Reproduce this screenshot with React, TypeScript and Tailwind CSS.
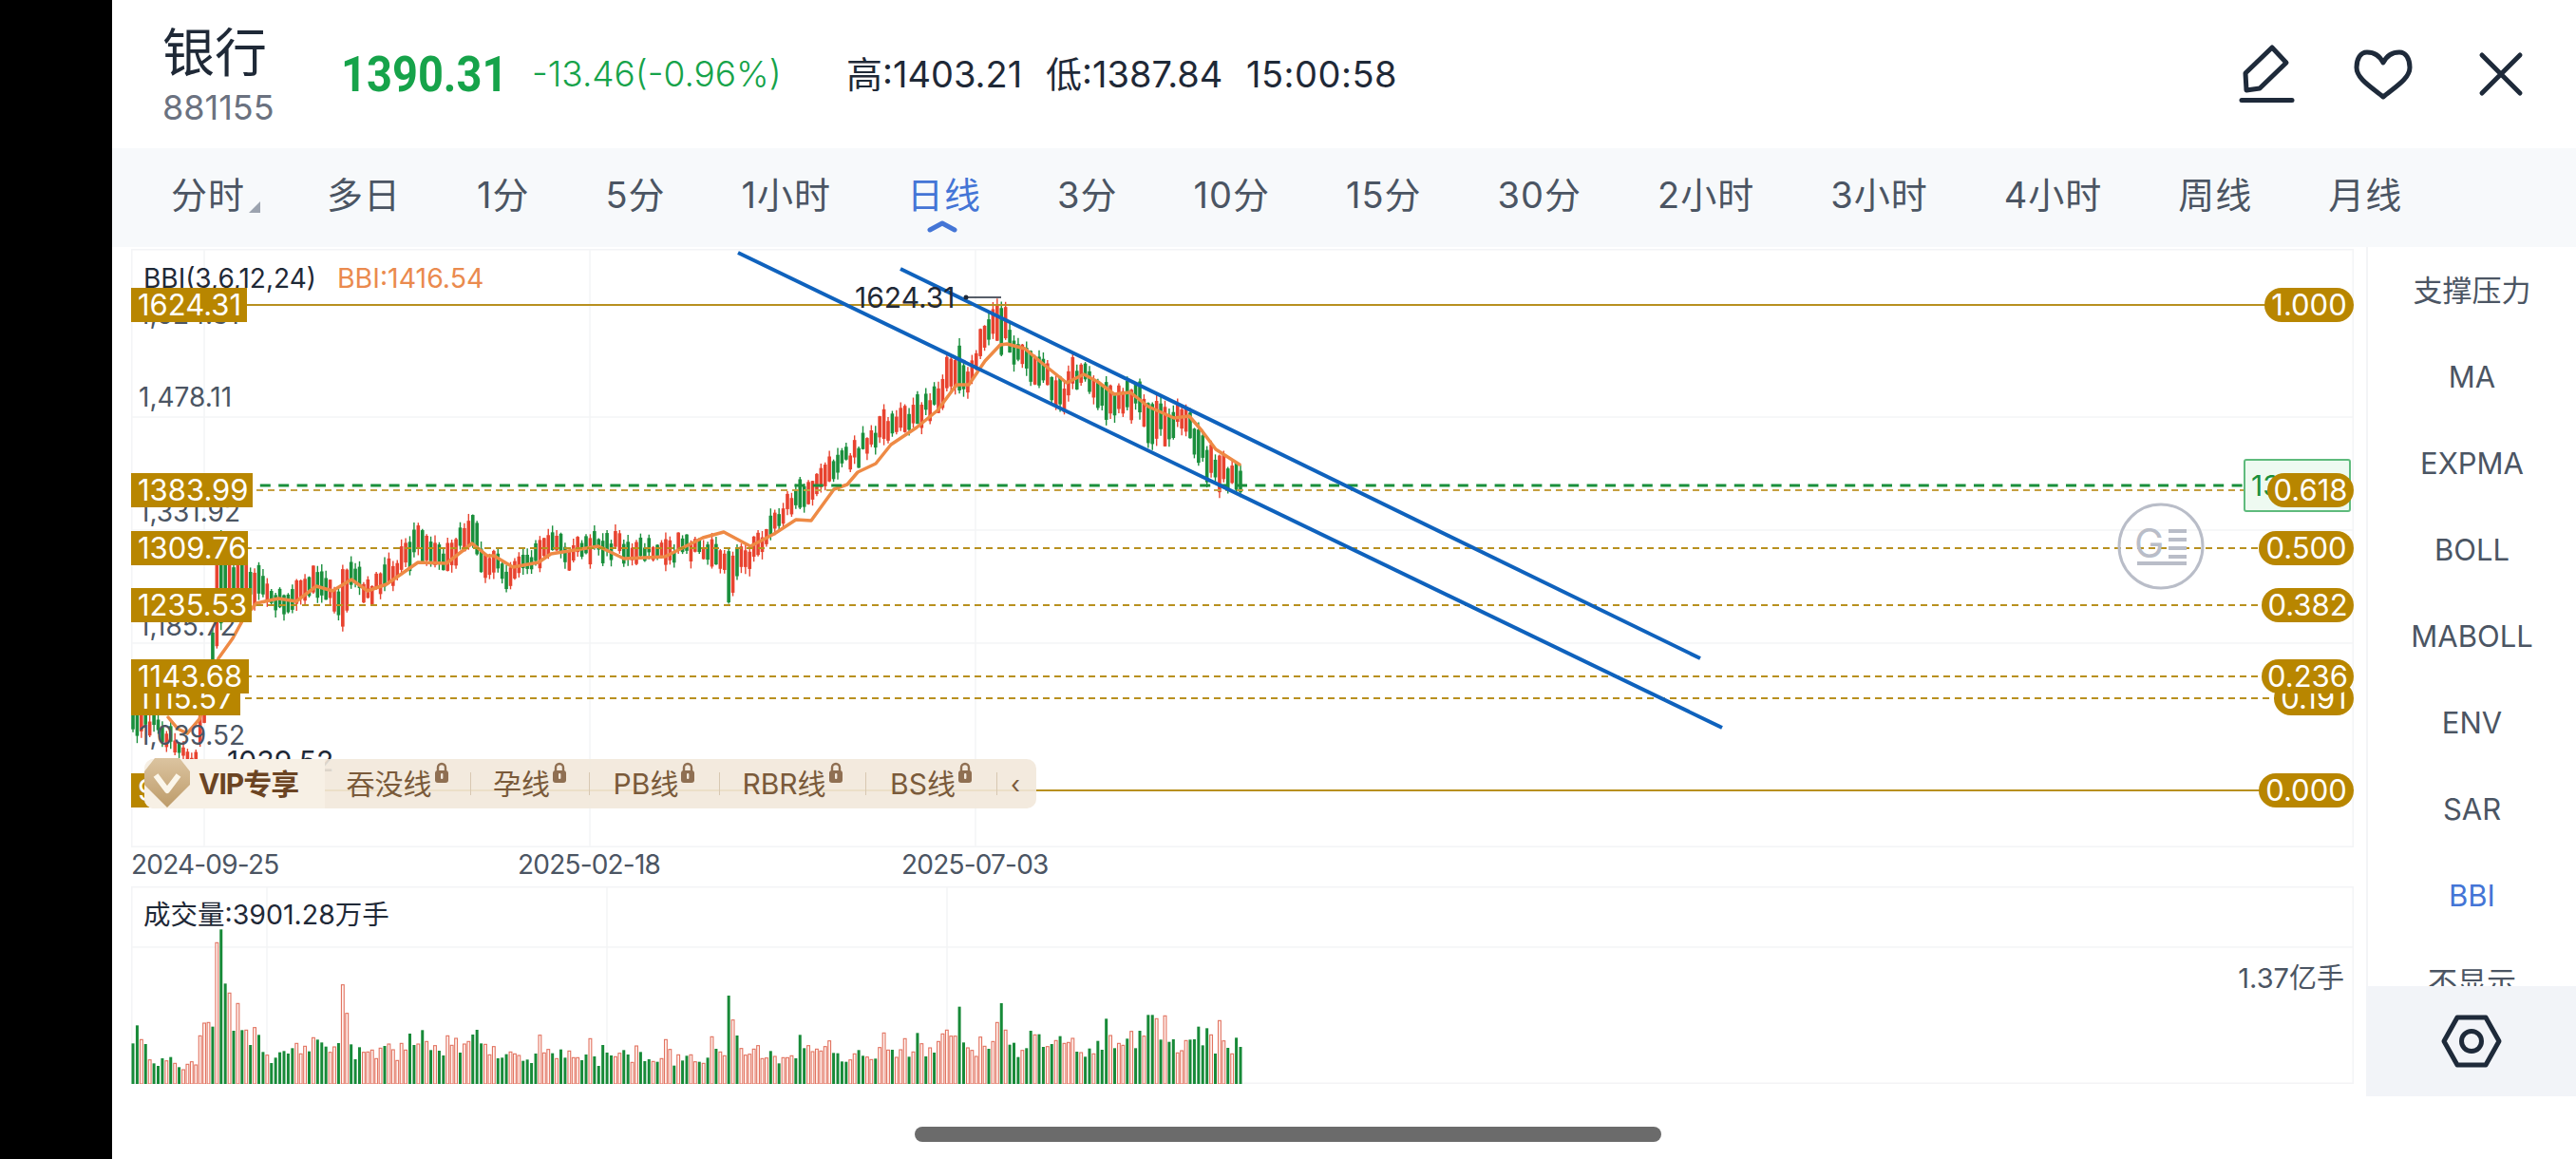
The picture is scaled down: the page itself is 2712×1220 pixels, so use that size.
const TABS = ["多日", "1分", "5分", "1小时", "日线", "3分", "10分", "15分", "30分", "2小时", "3小时", "4小时", "周线", "月线"];
const SIDE_ITEMS = ["支撑压力", "MA", "EXPMA", "BOLL", "MABOLL", "ENV", "SAR", "BBI", "不显示"];

const FONT = "font-['Inter','Noto_Sans_CJK_SC',sans-serif]";

// volume bars read off the picture: colour + top of bar in crop coordinates
const VOL_A = "g505 g448 r493 g507 r557 g568 g576 g552 r560 g548 r568 g580 r588 r571 r563 r573 r481 r441 r439 g452 r187 g145 g316 r346 g465 r379 g463 r463 g510 r455 g478 g532 r542 g567 g550 g533 g529 g537 g520 r505 r538 r514 g530 r487 g493 g502 g515 r533 r516 g504 r320 r410 g508 g555 g517 r533 r532 r526 r553 r520 g513 r507 r525 r559 r505 r526 g474 g510 r507 g463 r499 g526 r512 g528 g543 r481 r511 r489 g534 r507 r499 g477 g462 g505 r508 r541 r515 g552 g550 g539 r532 r538 r543 g560 g556 g567 g537 r479 r535 r524 g536 r553 g524 g550 r529 r550 r550 g558 g540 r490 g546 g576 g510 g534 g543 r547 r536 g526 g540 r565 r513 g532 g561 g555 r562 g563 r553 r493 r524 g575 r541 g559 g544 r541";
const VOL_B = "r563 g563 r568 g550 r484 g522 r532 r544 g354 r431 g480 r521 r542 r539 r523 r512 r553 r551 g529 r546 g568 r550 r550 r544 g552 g478 g520 r512 r531 r523 r529 r515 r497 g535 g536 g562 g563 r557 r538 g526 g544 r548 r556 g553 r518 r472 r526 g525 r549 r525 r490 g547 r532 g472 r506 g546 r519 g534 r499 r475 r463 r482 r482 g389 g502 r519 r527 r546 r485 r514 g522 r499 r439 g378 r463 g509 g503 g548 r527 g520 g465 r478 g476 g516 r515 g507 r496 g482 r505 r502 r489 g531 r534 g547 g521 r538 g497 g525 g427 r480 g520 r505 r511 g490 r467 g520 g465 r482 g415 g415 r427 g493 r418 g500 g492 r535 r528 r496 g493 g492 g452 g511 g457 r478 g537 r433 r497 g519 r538 g487 g516";

const BARS = (VOL_A + " " + VOL_B).split(" ").map((s, i, all) => {
  const top = 930 + Number(s.slice(1)) / 3;
  return { up: s[0] === "r", top, x: 140 + (i * (1306 - 140)) / (all.length - 1) };
});

const MID: [number, number][] = [[140, 752], [165, 762], [190, 785], [205, 800], [220, 720], [232, 610], [250, 605], [265, 610], [285, 625], [300, 640], [310, 628], [330, 615], [345, 625], [360, 628], [372, 600], [385, 628], [400, 610], [415, 605], [425, 590], [440, 572], [470, 592], [490, 560], [500, 565], [510, 595], [525, 590], [535, 610], [545, 590], [575, 580], [590, 570], [600, 585], [625, 572], [650, 575], [700, 585], [720, 572], [755, 590], [768, 605], [800, 572], [834, 527], [857, 517], [873, 490], [900, 480], [930, 447], [953, 443], [980, 427], [1003, 390], [1018, 397], [1033, 363], [1049, 340], [1060, 347], [1072, 373], [1087, 383], [1106, 403], [1121, 417], [1131, 393], [1144, 397], [1160, 413], [1167, 427], [1183, 417], [1198, 420], [1206, 440], [1225, 447], [1248, 440], [1259, 460], [1271, 487], [1286, 498], [1306, 505]];

const BBI = "177,755 187,767 197,772 210,757 220,725 230,693 245,672 257,650 270,635 293,630 312,633 333,617 350,622 370,610 387,622 407,615 440,592 470,593 497,572 513,585 520,585 540,597 567,592 580,583 630,575 657,588 700,586 740,566 762,560 790,575 815,562 838,547 854,548 878,515 892,510 903,497 922,488 938,468 965,450 987,432 1007,405 1020,405 1037,380 1053,363 1060,362 1079,367 1098,383 1123,403 1141,394 1156,402 1173,415 1190,413 1209,428 1236,440 1252,438 1265,453 1280,473 1305,489";

const midAt = (x: number) => {
  for (let i = 1; i < MID.length; i++) {
    if (x <= MID[i][0]) {
      const [x0, y0] = MID[i - 1];
      const [x1, y1] = MID[i];
      return y0 + ((y1 - y0) * (x - x0)) / (x1 - x0);
    }
  }
  return MID[MID.length - 1][1];
};

const rnd = (i: number) => {
  const v = Math.sin(i * 127.1 + 11.7) * 43758.5453;
  return v - Math.floor(v);
};

const LEFT_LABELS = [
  { text: "1115.57", cls: "top-[455px] w-[115px]" },
  { text: "1143.68", cls: "top-[432px] w-[124px]" },
  { text: "1235.53", cls: "top-[357px] w-[127px]" },
  { text: "1309.76", cls: "top-[297px] w-[123px]" },
  { text: "1383.99", cls: "top-[236px] w-[128px]" },
  { text: "1624.31", cls: "top-[41px] w-[122px]" },
  { text: "975.35", cls: "top-[552px] w-[122px]" }
];

const RIGHT_LABELS = [
  { text: "0.191", cls: "top-[455px] w-[84px]" },
  { text: "0.236", cls: "top-[432px] w-[97px]" },
  { text: "0.382", cls: "top-[357px] w-[97px]" },
  { text: "0.500", cls: "top-[297px] w-[100px]" },
  { text: "1.000", cls: "top-[41px] w-[94px]" },
  { text: "0.000", cls: "top-[552px] w-[100px]" }
];

const AXIS_LABELS = [
  { text: "1,624.31", cls: "top-[52px]" },
  { text: "1,478.11", cls: "top-[139px]" },
  { text: "1,331.92", cls: "top-[260px]" },
  { text: "1,185.72", cls: "top-[380px]" },
  { text: "1,039.52", cls: "top-[495px]" }
];

const VIP_ITEMS = [
  { text: "吞没线", cls: "w-[154px]" },
  { text: "孕线", cls: "w-[125px]" },
  { text: "PB线", cls: "w-[137px]" },
  { text: "RBR线", cls: "w-[154px]" },
  { text: "BS线", cls: "w-[138px]" }
];

const Lock = () => (
  <svg width="16" height="24" viewBox="0 0 16 24" className="mb-[22px] ml-[2px] flex-none">
    <path d="M4 10V6a4 4 0 0 1 8 0v4" fill="none" stroke="#8f6f52" strokeWidth="2.4" />
    <rect x="1" y="9" width="14" height="13" rx="3" fill="#8f6f52" />
    <rect x="7" y="12" width="2.4" height="6" rx="1" fill="#f3e9dc" />
  </svg>
);

const ChartDrawing = () => (
  <svg className="absolute inset-0" width="2340" height="630" viewBox="138 262 2340 630">
    {[215, 621, 1027].map((x) => (
      <line key={x} x1={x} x2={x} y1="262" y2="892" stroke="#f3f4f6" strokeWidth="1.5" />
    ))}
    {[439, 558, 677].map((y) => (
      <line key={y} x1="138" x2="2478" y1={y} y2={y} stroke="#f3f4f6" strokeWidth="1.5" />
    ))}
    {BARS.map((b, i) => {
      const vol = 1141 - b.top;
      const body = Math.max(8, vol * 0.58);
      const mid = midAt(b.x) + (rnd(i) - 0.5) * 16;
      const color = b.up ? "#e8432f" : "#1a8f3c";
      return (
        <g key={i}>
          <line x1={b.x} x2={b.x} y1={mid - body / 2 - rnd(i + 300) * 8} y2={mid + body / 2 + rnd(i + 600) * 8} stroke={color} strokeWidth="1.4" />
          <rect x={b.x - 1.8} y={mid - body / 2} width="3.6" height={body} fill={color} />
        </g>
      );
    })}
    <polyline points={BBI} fill="none" stroke="#ee8a45" strokeWidth="3.5" strokeLinejoin="round" strokeLinecap="round" />
    <line x1="138" x2="2478" y1="321" y2="321" stroke="#b8901f" strokeWidth="2" />
    <line x1="138" x2="2478" y1="832" y2="832" stroke="#b8901f" strokeWidth="2" />
    <line x1="138" x2="2478" y1="516" y2="516" stroke="#c6a042" strokeWidth="2" strokeDasharray="7 5" />
    {[577, 637, 712, 735].map((y) => (
      <line key={y} x1="138" x2="2478" y1={y} y2={y} stroke="#b8901f" strokeWidth="2" strokeDasharray="7 5" />
    ))}
    <line x1="138" x2="2362" y1="511" y2="511" stroke="#1a8f3c" strokeWidth="3" strokeDasharray="11 8.4" />
    <line x1="777" y1="266" x2="1813" y2="766" stroke="#0f62bd" strokeWidth="4" />
    <line x1="948" y1="283" x2="1790" y2="693" stroke="#0f62bd" strokeWidth="4" />
    <circle cx="1017" cy="313" r="2.5" fill="#1f2937" />
    <line x1="1017" x2="1054" y1="313" y2="313" stroke="#1f2937" strokeWidth="1.6" />
    <circle cx="2275" cy="575" r="44" fill="none" stroke="#b9bdc8" strokeWidth="3" />
    <text x="2247" y="587" fontFamily="Inter, sans-serif" fontSize="42" fill="#b9bdc8">G</text>
    {[559, 568, 577, 586].map((y) => (
      <rect key={y} x="2283" y={y - 2} width="19" height="4" fill="#b9bdc8" />
    ))}
    <rect x="2250" y="591" width="52" height="4" fill="#b9bdc8" />
  </svg>
);

const VolumeDrawing = () => (
  <svg className="absolute inset-0" width="2340" height="208" viewBox="138 933 2340 208">
    {[281, 639, 997].map((x) => (
      <line key={x} x1={x} x2={x} y1="933" y2="1141" stroke="#f3f4f6" strokeWidth="1.5" />
    ))}
    <line x1="138" x2="2478" y1="997" y2="997" stroke="#f3f4f6" strokeWidth="1.5" />
    {BARS.map((b, i) =>
      b.up ? (
        <rect key={i} x={b.x - 1.4} y={b.top} width="2.8" height={1141 - b.top} fill="#fff6f3" stroke="#e2725f" strokeWidth="1.1" />
      ) : (
        <rect key={i} x={b.x - 1.5} y={b.top} width="3" height={1141 - b.top} fill="#178a38" />
      )
    )}
  </svg>
);

export default function App() {
  return (
    <div className={`flex h-[1220px] w-[2712px] overflow-hidden bg-black text-[#1f2937] ${FONT}`}>
      <div className="w-[118px] flex-none" />
      <div className="flex min-w-0 flex-1 flex-col bg-white">
        <header className="flex h-[156px] flex-none items-center pl-[53px]">
          <div className="w-[188px] flex-none">
            <div className="text-[55px] leading-[64px] text-[#1f2937]">银行</div>
            <div className="mt-[6px] text-[36px] leading-[40px] text-[#6b7280]">881155</div>
          </div>
          <div className="w-[201px] flex-none origin-left scale-y-110 font-['Roboto',sans-serif] text-[47px] font-bold text-[#16a34a]">1390.31</div>
          <div className="w-[331px] flex-none text-[37px] font-light text-[#16a34a]">-13.46(-0.96%)</div>
          <div className="w-[210px] flex-none text-[38px]">高:1403.21</div>
          <div className="w-[211px] flex-none text-[38px]">低:1387.84</div>
          <div className="flex-1 text-[38px] tracking-[0.5px]">15:00:58</div>
          <svg width="60" height="66" viewBox="2356 44 60 66" className="flex-none" fill="none" stroke="#1e2a3a" strokeWidth="5" strokeLinejoin="round" strokeLinecap="round">
            <path d="M2392 49 2407 65 2379 92 2365 94 2364 76Z" />
            <path d="M2360 104.500H2413" />
          </svg>
          <svg width="64" height="58" viewBox="2476 48 64 58" className="ml-[60px] flex-none" fill="none" stroke="#1e2a3a" strokeWidth="5" strokeLinejoin="round">
            <path d="M2509 65C2505 57 2498 54 2492 54 2485 54 2481 61 2481 70 2481 82 2497 91 2509 101 2521 91 2537 82 2537 70 2537 61 2533 54 2526 54 2520 54 2513 57 2509 65Z" />
          </svg>
          <svg width="54" height="54" viewBox="2606 50 54 54" className="ml-[66px] mr-[52px] flex-none" fill="none" stroke="#1e2a3a" strokeWidth="5" strokeLinecap="round">
            <path d="M2613 57 2653 97M2653 57 2613 97" />
          </svg>
        </header>

        <nav className="flex h-[104px] flex-none items-center bg-[#f7f9fb] pb-[6px] pl-[62px] text-[38px] tracking-[1px] text-[#4b5563]">
          <div className="mr-[-10px] flex items-end">
            <span>分时</span>
            <span className="mb-[10px] ml-[4px] h-0 w-0 border-b-[12px] border-l-[12px] border-b-[#9ca3af] border-l-transparent" />
          </div>
          {TABS.map((t) => (
            <div key={t} className={`relative ml-[80px] ${t === "日线" ? "text-[#4475d6]" : ""}`}>
              {t}
              {t === "日线" && (
                <svg width="32" height="14" viewBox="0 0 32 14" className="absolute bottom-[-11px] left-[21px]">
                  <path d="M3 11 16 4 29 11" fill="none" stroke="#4475d6" strokeWidth="5" strokeLinecap="round" strokeLinejoin="round" />
                </svg>
              )}
            </div>
          ))}
        </nav>

        <div className="flex h-[894px] flex-none">
          <main className="w-[2373px] flex-none pl-[20px] pr-[13px] pt-[2px]">
            <div className="relative h-[630px] overflow-hidden shadow-[inset_0_0_0_1.5px_#f3f4f6]">
              <ChartDrawing />
              <div className="absolute left-[13px] top-[14px] flex items-center text-[28px] leading-[34px]">
                <span>BBI(3,6,12,24)</span>
                <span className="ml-[22px] text-[28.5px] text-[#ea8a4e]">BBI:1416.54</span>
              </div>
              {AXIS_LABELS.map((a) => (
                <div key={a.text} className={`absolute left-[8px] text-[28px] leading-[34px] text-[#4b5563] ${a.cls}`}>{a.text}</div>
              ))}
              <div className="absolute left-[101px] top-[522px] text-[30px] leading-[34px]">1039.52</div>
              <div className="absolute left-[762px] top-[34px] text-[30px] leading-[34px]">1624.31</div>
              <div className="absolute right-[3px] top-[221px] flex h-[56px] w-[113px] items-center rounded-[3px] border-2 border-[#5fbb7d] bg-[#eefaf1] pl-[6px] text-[30px] text-[#1a8f3c]">13</div>
              {LEFT_LABELS.map((l) => (
                <div key={l.text} className={`absolute left-0 flex h-[36px] items-center bg-[#b88600] pb-[2px] pl-[7px] text-[31px] leading-none text-white ${l.cls}`}>{l.text}</div>
              ))}
              {RIGHT_LABELS.map((l) => (
                <div key={l.text} className={`absolute right-0 flex h-[36px] items-center justify-center rounded-full bg-[#b88600] pb-[2px] text-[31px] leading-none text-white ${l.cls}`}>{l.text}</div>
              ))}
              <div className="absolute right-0 top-[236px] flex h-[36px] w-[91px] items-center justify-center rounded-full bg-[#b88600] pb-[2px] text-[31px] leading-none text-white">0.618</div>

              <div className="absolute left-[14px] top-[537px] flex h-[52px] w-[939px] items-center rounded-[10px] bg-[#f2e8da]/90 text-[30px] text-[#7a5a3a]">
                <div className="flex h-full w-[190px] flex-none items-center rounded-l-[10px] bg-[#f7f0e5] pl-[57px] text-[30px] font-bold tracking-[-1px] text-[#6b4423]">VIP专享</div>
                {VIP_ITEMS.map((v) => (
                  <div key={v.text} className={`flex h-[24px] flex-none items-center justify-center border-r border-[#d8c8b2] ${v.cls}`}>
                    <span className="whitespace-nowrap">{v.text}</span>
                    <Lock />
                  </div>
                ))}
                <div className="flex-1 pl-[14px] text-[26px]">‹</div>
              </div>
              <svg width="50" height="56" viewBox="0 0 50 56" className="absolute left-[13px] top-[534px]">
                <defs>
                  <linearGradient id="vipShield" x1="0" y1="0" x2="0" y2="1">
                    <stop offset="0" stopColor="#d9c09a" />
                    <stop offset="1" stopColor="#b8945f" />
                  </linearGradient>
                </defs>
                <path d="M12 2H38L49 16V30L25 54 1 30V16Z" fill="url(#vipShield)" opacity="0.92" />
                <path d="M13 20 25 36 37 20" fill="none" stroke="#fbf6ea" strokeWidth="6" strokeLinejoin="round" />
              </svg>
            </div>

            <div className="relative h-[41px] text-[28px] leading-[36px] tracking-[-0.8px] text-[#4b5563]">
              <span className="absolute left-0 top-0">2024-09-25</span>
              <span className="absolute left-[407px] top-0">2025-02-18</span>
              <span className="absolute left-[811px] top-0">2025-07-03</span>
            </div>

            <div className="relative h-[208px] overflow-hidden shadow-[inset_0_0_0_1.5px_#f3f4f6]">
              <VolumeDrawing />
              <div className="absolute left-[13px] top-[13px] text-[28.5px] leading-[34px]">成交量:3901.28万手</div>
              <div className="absolute right-[10px] top-[80px] text-[29px] leading-[34px] text-[#4b5563]">1.37亿手</div>
            </div>
          </main>

          <aside className="flex h-full w-[221px] flex-none flex-col">
            <div className="h-[778px] flex-none overflow-hidden border-l-2 border-[#f3f4f6] pt-[1px]">
              {SIDE_ITEMS.map((s) => (
                <div key={s} className={`flex h-[91px] items-center justify-center text-[31px] ${s === "BBI" ? "text-[#4475d6]" : "text-[#4b5563]"}`}>{s}</div>
              ))}
            </div>
            <div className="flex h-[116px] flex-none items-center justify-center bg-[#f2f4f8]">
              <svg width="64" height="56" viewBox="0 0 64 56" fill="none" stroke="#1e2a3a" strokeWidth="5" strokeLinejoin="round">
                <path d="M17 3H47L61 28 47 53H17L3 28Z" />
                <circle cx="32" cy="28" r="10.500" />
              </svg>
            </div>
          </aside>
        </div>

        <div className="ml-[845px] mt-[32px] h-[16px] w-[786px] flex-none rounded-full bg-[#6b6b6b]" />
      </div>
    </div>
  );
}
